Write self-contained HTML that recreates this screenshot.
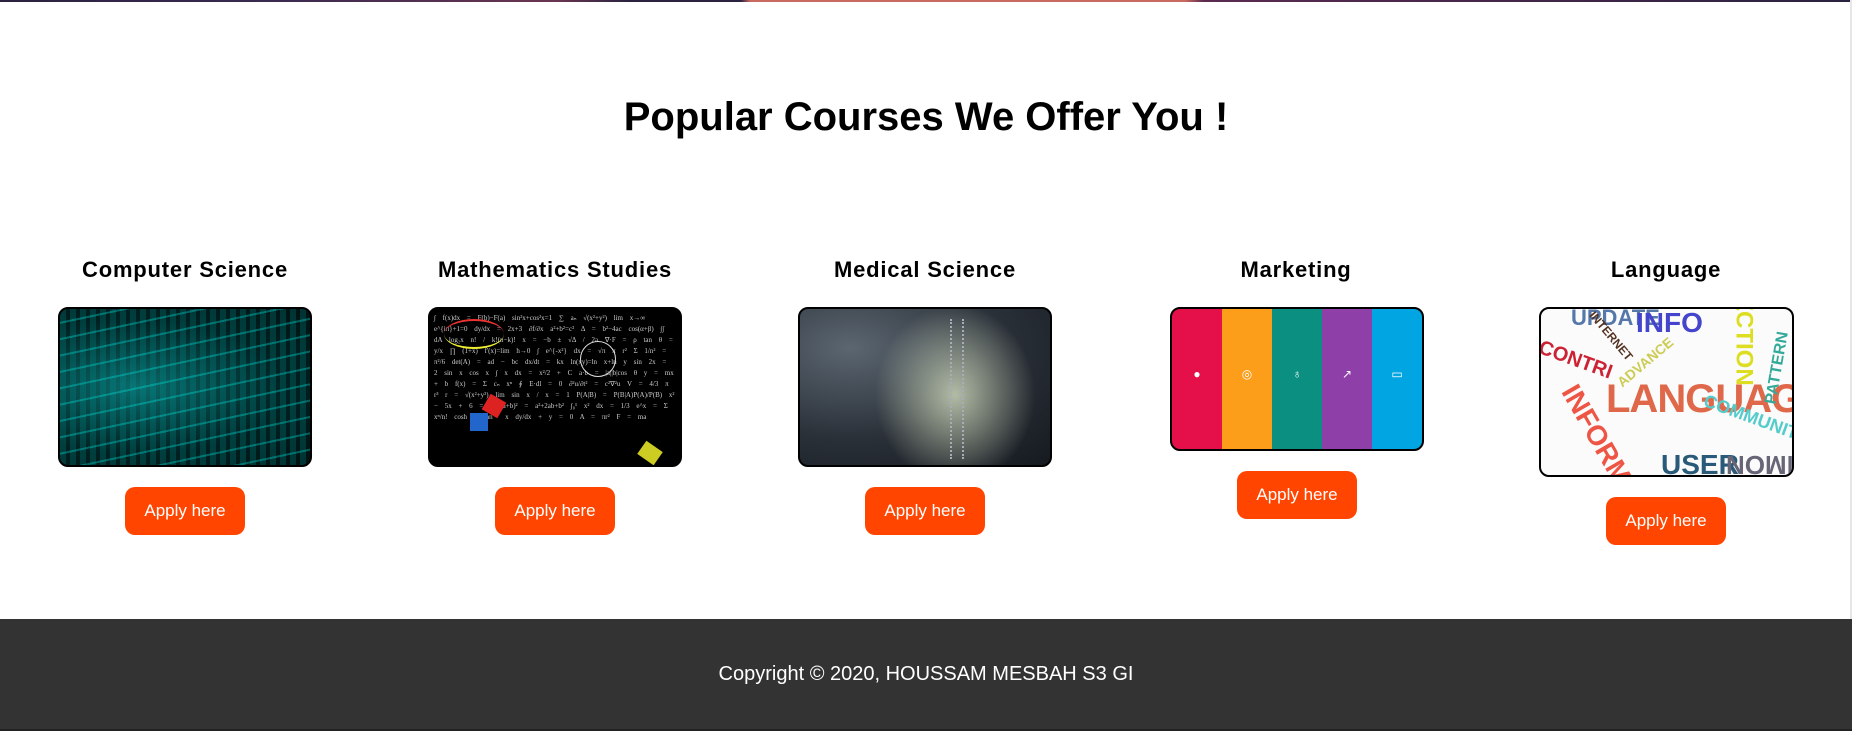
<!DOCTYPE html>
<html><head><meta charset="utf-8"><style>
*{margin:0;padding:0;box-sizing:border-box}
body{width:1852px;height:731px;overflow:hidden;background:#fff;font-family:"Liberation Sans",Arial,sans-serif;position:relative}
.top{position:absolute;left:0;top:0;width:1852px;height:2px;background:linear-gradient(90deg,#2a2240 0%,#3a2a50 15%,#6a3550 30%,#2a2240 34%,#2a2240 40%,#c86a60 40.5%,#c86a60 64%,#5a2a50 65%,#2a2240 100%)}
h1{position:absolute;left:0;width:1852px;top:94px;text-align:center;font-size:40px;font-weight:bold;color:#000;line-height:46px}
.col{position:absolute;top:0;width:370px;text-align:center}
.col h2{position:absolute;left:0;width:370px;top:257px;font-size:22px;font-weight:bold;line-height:26px;color:#000;letter-spacing:0.8px}
.img{position:absolute;left:58px;top:307px;width:254px;height:160px;border:2px solid #000;border-radius:10px;overflow:hidden}
.btn{position:absolute;left:125px;width:120px;height:48px;background:#ff4500;color:#fff;border-radius:10px;font-size:17px;line-height:48px;text-align:center}
.footer{position:absolute;left:0;top:619px;width:1852px;height:112px;background:#333;color:#fff;font-size:20px;text-align:center;line-height:110px}
.footer:after{content:"";position:absolute;left:0;bottom:0;width:1852px;height:2px;background:#222}
.sb{position:absolute;right:0;top:0;width:2px;height:619px;background:#e6e6e6}
</style></head><body>
<div class="top"></div>
<h1>Popular Courses We Offer You !</h1>

<div class="col" style="left:0">
<h2>Computer Science</h2>
<div class="img" style="background:repeating-linear-gradient(-12deg,transparent 0 14px,rgba(0,230,220,.35) 14px 16px),repeating-linear-gradient(90deg,rgba(0,150,150,.25) 0 6px,transparent 6px 10px),radial-gradient(ellipse at 30% 50%,#0a6a6a,#022 60%,#011)"></div>
<div class="btn" style="top:487px">Apply here</div>
</div>

<div class="col" style="left:370px">
<h2>Mathematics Studies</h2>
<div class="img" style="background:#000;color:#ccc;font-size:7px;line-height:11px;text-align:left;padding:4px;font-family:'Liberation Serif',serif;word-spacing:5px">
∫ f(x)dx = F(b)−F(a) sin²x+cos²x=1 ∑ aₙ √(x²+y²) lim x→∞ e^{iπ}+1=0 dy/dx = 2x+3 ∂f/∂x a²+b²=c² Δ = b²−4ac cos(α+β) ∫∫ dA log₂x n! / k!(n−k)! x = −b ± √Δ / 2a ∇·F = ρ tan θ = y/x ∏ (1+x) f'(x)=lim h→0 ∫ e^{-x²} dx = √π π r² Σ 1/n² = π²/6 det(A) = ad − bc dx/dt = kx ln(xy)=ln x+ln y sin 2x = 2 sin x cos x ∫ x dx = x²/2 + C a·b = |a||b|cos θ y = mx + b f(x) = Σ cₙ xⁿ ∮ E·dl = 0 ∂²u/∂t² = c²∇²u V = 4/3 π r³ r = √(x²+y²) lim sin x / x = 1 P(A|B) = P(B|A)P(A)/P(B) x² − 5x + 6 = 0 (a+b)² = a²+2ab+b² ∫₀¹ x² dx = 1/3 e^x = Σ xⁿ/n! cosh x tan⁻¹ x dy/dx + y = 0 A = πr² F = ma
<div style="position:absolute;left:14px;top:10px;width:60px;height:30px;border-top:2px solid #e33;border-bottom:2px solid #ee3;border-radius:50%"></div>
<div style="position:absolute;left:150px;top:32px;width:36px;height:36px;border:1px solid #ddd;border-radius:50%"></div>
<div style="position:absolute;left:55px;top:88px;width:18px;height:18px;background:#d22;transform:rotate(30deg)"></div>
<div style="position:absolute;left:40px;top:104px;width:18px;height:18px;background:#26c"></div>
<div style="position:absolute;left:210px;top:136px;width:20px;height:16px;background:#cc2;transform:rotate(35deg)"></div>
</div>
<div class="btn" style="top:487px">Apply here</div>
</div>

<div class="col" style="left:740px">
<h2>Medical Science</h2>
<div class="img" style="background:radial-gradient(ellipse 80px 90px at 62% 55%,rgba(210,220,190,.8),transparent),radial-gradient(ellipse at 20% 25%,#5b6670,#2a3038 55%,#151a20)">
<div style="position:absolute;left:150px;top:10px;width:14px;height:140px;border-left:2px dotted #aab;border-right:2px dotted #aab"></div>
</div>
<div class="btn" style="top:487px">Apply here</div>
</div>

<div class="col" style="left:1111px">
<h2>Marketing</h2>
<div class="img" style="left:59px;width:254px;height:144px;background:linear-gradient(90deg,#e5104a 0 20%,#fd9e1a 20% 40%,#0a8f80 40% 60%,#8e3fa8 60% 80%,#00a5e2 80%)">
<div style="position:absolute;top:58px;left:0;width:100%;display:flex;color:#fff;font-size:12px"><span style="flex:1">●</span><span style="flex:1">◎</span><span style="flex:1">♁</span><span style="flex:1">↗</span><span style="flex:1">▭</span></div>
</div>
<div class="btn" style="top:471px;left:126px">Apply here</div>
</div>

<div class="col" style="left:1481px">
<h2>Language</h2>
<div class="img" style="left:58px;width:255px;height:170px;background:#fbfbfb;font-weight:bold;font-family:'Liberation Sans Narrow','Liberation Sans',sans-serif">
<span style="position:absolute;left:30px;top:-4px;color:#57a;font-size:22px">UPDATE</span>
<span style="position:absolute;left:95px;top:-2px;color:#44c;font-size:28px">INFO</span>
<span style="position:absolute;left:150px;top:10px;color:#dd2;font-size:24px;transform:rotate(90deg)">FECTION</span>
<span style="position:absolute;left:-4px;top:40px;color:#c23;font-size:20px;transform:rotate(20deg)">CONTRI</span>
<span style="position:absolute;left:65px;top:68px;color:#e0684a;font-size:40px;letter-spacing:-1px">LANGUAGE</span>
<span style="position:absolute;left:0;top:110px;color:#e54;font-size:28px;transform:rotate(60deg)">INFORM</span>
<span style="position:absolute;left:120px;top:140px;color:#2a5a7a;font-size:28px">USER</span>
<span style="position:absolute;left:185px;top:140px;color:#667;font-size:26px;transform:rotate(180deg)">COMMON</span>
<span style="position:absolute;left:160px;top:100px;color:#5cc;font-size:18px;transform:rotate(20deg)">COMMUNITY</span>
<span style="position:absolute;left:70px;top:45px;color:#cc5;font-size:14px;transform:rotate(-40deg)">ADVANCE</span>
<span style="position:absolute;left:200px;top:50px;color:#3a9;font-size:16px;transform:rotate(-80deg)">PATTERN</span>
<span style="position:absolute;left:40px;top:20px;color:#532;font-size:12px;transform:rotate(50deg)">INTERNET</span>
</div>
<div class="btn" style="top:497px">Apply here</div>
</div>

<div class="sb"></div>
<div class="footer">Copyright © 2020, HOUSSAM MESBAH S3 GI</div>
</body></html>
